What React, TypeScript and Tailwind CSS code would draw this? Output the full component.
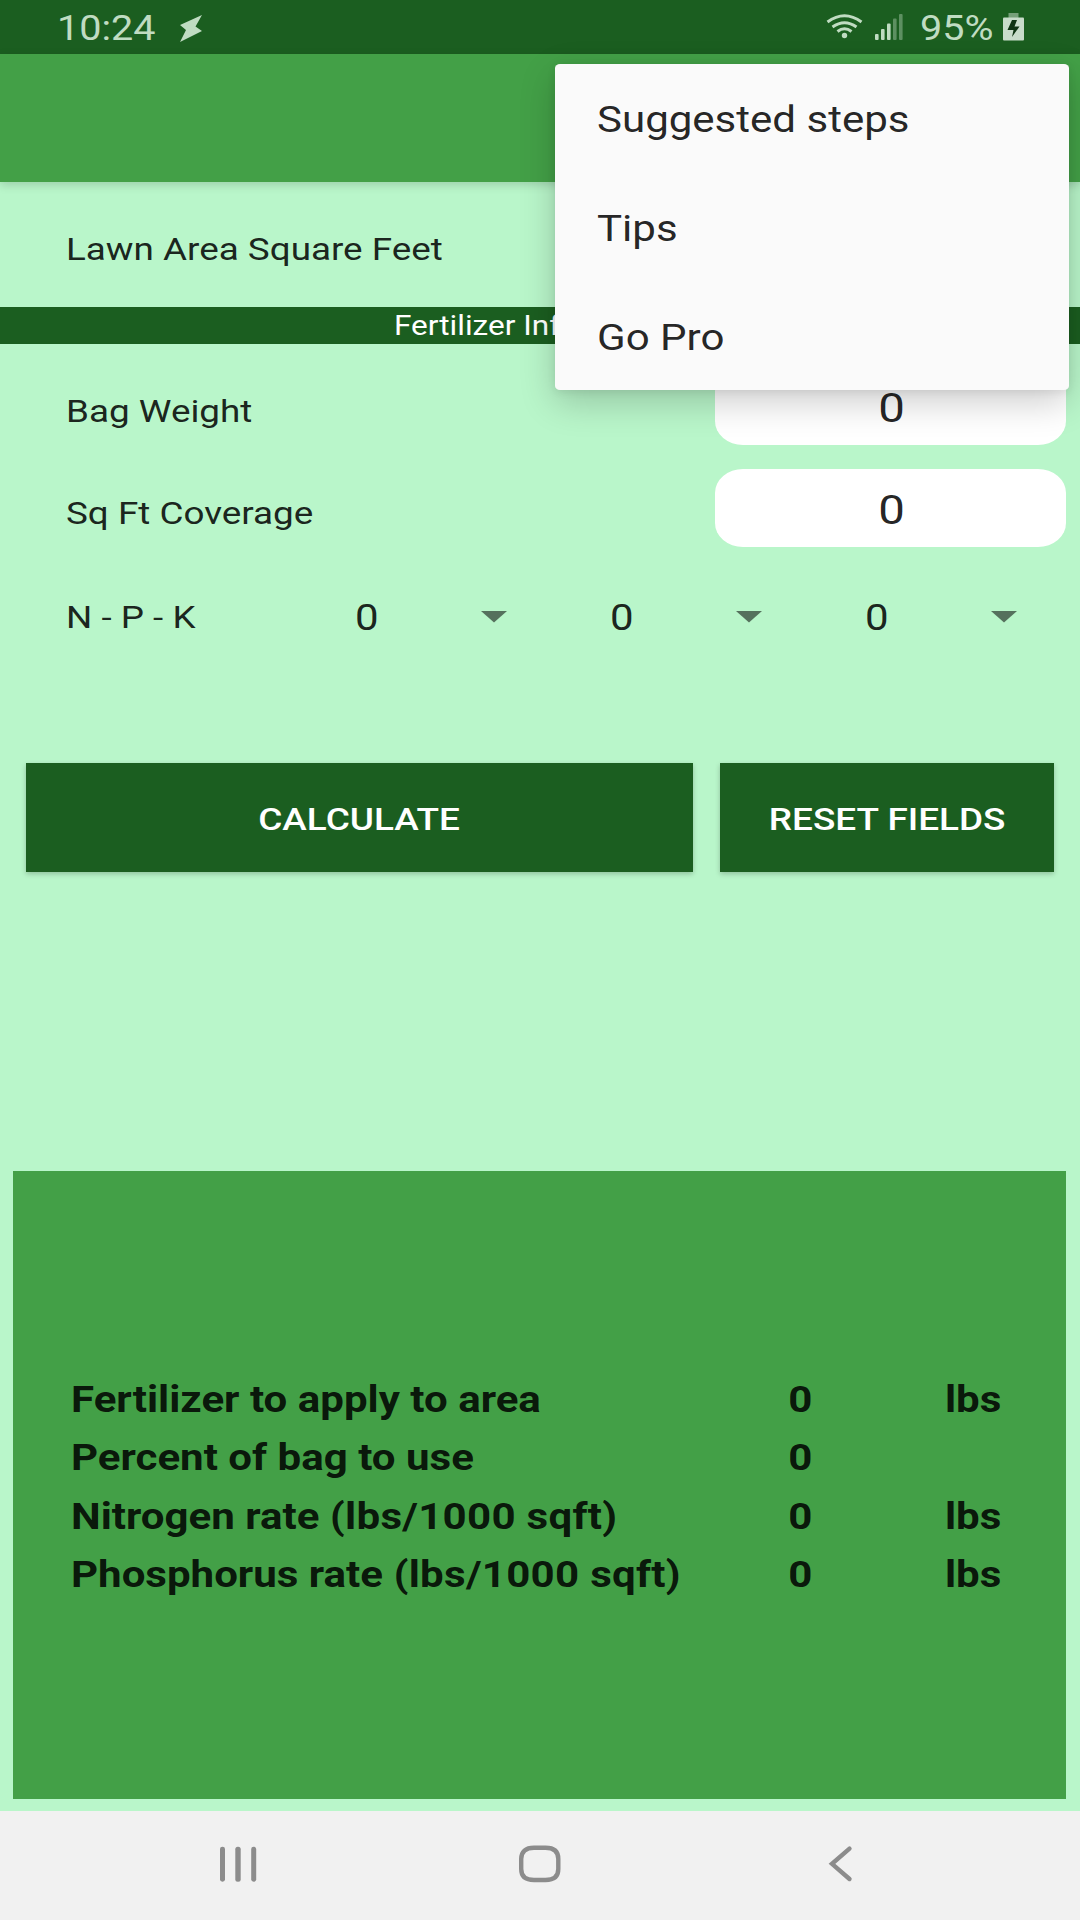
import { useState } from 'react'
import type { ReactNode } from 'react'
import clsx from 'clsx'

interface ResultRow {
  label: string
  basis?: string
  value: string
  unit?: string
}

const menuItems = ['Suggested steps', 'Tips', 'Go Pro']

const results: ResultRow[] = [
  { label: 'Fertilizer to apply to area', value: '0', unit: 'lbs' },
  { label: 'Percent of bag to use', value: '0' },
  { label: 'Nitrogen rate', basis: '(lbs/1000 sqft)', value: '0', unit: 'lbs' },
  { label: 'Phosphorus rate', basis: '(lbs/1000 sqft)', value: '0', unit: 'lbs' },
]

// Wide text, grows from the left edge or from the middle
function Wide({ children, className }: { children: ReactNode; className?: string }) {
  return (
    <span className={clsx('inline-block scale-x-[1.158] whitespace-nowrap', className)}>
      {children}
    </span>
  )
}

function StatusBar() {
  return (
    <div className="flex h-[54px] items-center bg-[#1b5e20] text-[#c0dcc2]">
      <div className="flex w-[180px] pl-[57px] pt-[3px] text-[34.2px] leading-none">
        <Wide className="origin-left">10:24</Wide>
      </div>
      <svg width="23" height="28" viewBox="0 0 23 28" className="mt-[2px]" fill="currentColor">
        <path d="M22 1 L0 11 L6 16 L0 28 L22 17 L15.500 12.500 Z" />
      </svg>
      <div className="ml-auto flex items-center">
        <svg width="37" height="25" viewBox="0 0 37 25" fill="none" stroke="currentColor">
          <path d="M1.500 8 Q18.500 -4.500 35.500 8" strokeWidth="3" />
          <path d="M6.500 13 Q18.500 4.500 30.500 13" strokeWidth="3" />
          <path d="M11.500 17.500 Q18.500 12 25.500 17.500" strokeWidth="3" />
          <circle cx="18.500" cy="21.500" r="2.700" fill="currentColor" stroke="none" />
        </svg>
        <svg width="28" height="27" viewBox="0 0 28 27" fill="currentColor" className="ml-[12px]">
          <rect x="0" y="21" width="3.600" height="6" rx="1" />
          <rect x="6" y="16" width="3.600" height="11" rx="1" />
          <rect x="12" y="10.500" width="3.600" height="16.500" rx="1" />
          <rect x="18" y="5.500" width="3.600" height="21.500" rx="1" opacity="0.4" />
          <rect x="24" y="1" width="3.600" height="26" rx="1" opacity="0.4" />
        </svg>
        <div className="ml-[17px] w-[83px] pt-[3px] text-[34.2px] leading-none">
          <Wide className="origin-left">95%</Wide>
        </div>
        <svg width="21" height="28" viewBox="0 0 21 28" className="mr-[56px]">
          <rect x="5.500" y="0" width="10" height="5" fill="#76a079" />
          <rect x="0" y="4.500" width="21" height="23" rx="1" fill="#c8dcca" />
          <path d="M9 7 H14 L11.500 13.500 H16.500 L9 24 L10.500 17 H4.500 Z" fill="#0f3413" />
        </svg>
      </div>
    </div>
  )
}

function Label({ children }: { children: ReactNode }) {
  return (
    <div className="w-[715px] pl-[66px] text-[31.8px] leading-[40px] text-black/87">
      <Wide className="origin-left">{children}</Wide>
    </div>
  )
}

function NumberField({ value }: { value: string }) {
  return (
    <div className="flex h-[78px] w-[351px] items-center justify-center rounded-[28px/24px] bg-white pl-[2px] pt-[4px] text-[40.9px] leading-none text-black/87">
      <Wide>{value}</Wide>
    </div>
  )
}

function Spinner({ value }: { value: string }) {
  return (
    <div className="flex w-[255px] shrink-0 items-center">
      <div className="w-[126px] pt-[1px] text-[36.3px] leading-[40px] text-black/87">
        <Wide className="origin-left">{value}</Wide>
      </div>
      <svg width="26" height="12" viewBox="0 0 26 12" className="-mt-[1px]">
        <path d="M0 0 H26 L13 11.500 Z" fill="#000" fillOpacity="0.54" />
      </svg>
    </div>
  )
}

export default function App() {
  const [menuOpen] = useState(true)

  return (
    <div className="relative flex h-[1920px] w-[1080px] flex-col overflow-hidden bg-[#b9f6ca] font-['Roboto',sans-serif]">
      <StatusBar />
      <header className="h-[127.5px] bg-[#43a047] shadow-[0_3px_9px_rgba(0,0,0,0.16)]" />

      <main className="flex h-[1629.5px] flex-col">
        <div className="flex h-[125.5px] items-center pt-[10px]">
          <Label>Lawn Area Square Feet</Label>
        </div>

        {/* Section title */}
        <div className="flex h-[37px] items-center justify-center bg-[#1b5e20] pl-[2px] pt-[3px] text-[27.24px] leading-none text-white">
          <Wide>Fertilizer Information</Wide>
        </div>

        <div className="mt-[23px] flex flex-col gap-[24px]">
          <div className="flex items-center">
            <div className="pt-[10px]">
              <Label>Bag Weight</Label>
            </div>
            <NumberField value="0" />
          </div>
          <div className="flex items-center">
            <div className="pt-[10px]">
              <Label>Sq Ft Coverage</Label>
            </div>
            <NumberField value="0" />
          </div>
        </div>

        {/* N - P - K pickers */}
        <div className="mt-[50px] flex h-[40px] items-center">
          <div className="w-[355px] shrink-0 pl-[66px] text-[31.8px] leading-[40px] text-black/87">
            <Wide className="origin-left">N - P - K</Wide>
          </div>
          <Spinner value="0" />
          <Spinner value="0" />
          <Spinner value="0" />
        </div>

        <div className="mt-[126px] flex gap-[27px] pl-[26px] text-[31.9px] font-medium leading-none text-white">
          <button className="h-[109px] w-[667px] bg-[#1b5e20] pt-[4px] shadow-[0_2px_5px_rgba(0,0,0,0.22)]">
            <Wide>CALCULATE</Wide>
          </button>
          <button className="h-[109px] w-[334px] bg-[#1b5e20] pt-[4px] shadow-[0_2px_5px_rgba(0,0,0,0.22)]">
            <Wide>RESET FIELDS</Wide>
          </button>
        </div>

        {/* Results */}
        <div className="ml-[13px] mt-[299px] flex h-[628px] w-[1053px] flex-col justify-center bg-[#43a047] pt-[5px] text-[36.3px] font-bold leading-[58.4px] text-black/87">
          {results.map(row => (
            <div key={row.label} className="flex">
              <div className="w-[707px] pl-[58px]">
                <Wide className="origin-left">
                  {row.label}
                  {row.basis && <span className="tracking-[0.25px]"> {row.basis}</span>}
                </Wide>
              </div>
              <div className="w-[160px] text-center">
                <Wide>{row.value}</Wide>
              </div>
              <div className="pl-[65px]">
                <Wide className="origin-left">{row.unit}</Wide>
              </div>
            </div>
          ))}
        </div>
      </main>

      {/* Navigation bar */}
      <nav className="flex flex-1 items-start bg-[#f1f1f1] pl-[220px] pt-[34px] text-[#8c8c8c]">
        <svg width="38" height="38" viewBox="0 0 38 38" fill="currentColor">
          <rect x="0" y="1.700" width="5" height="35" rx="2.400" />
          <rect x="15.300" y="1.700" width="5.400" height="35" rx="2.500" />
          <rect x="31.200" y="1.700" width="5" height="35" rx="2.400" />
        </svg>
        <svg width="44" height="38" viewBox="0 0 44 38" fill="none" stroke="currentColor" className="ml-[260px]">
          <path
            d="M16 2.800 H27.500 Q40.300 2.800 40.300 14 V24 Q40.300 35 27.500 35 H16 Q3.200 35 3.200 24 V14 Q3.200 2.800 16 2.800 Z"
            strokeWidth="4.400"
          />
        </svg>
        <svg width="26" height="38" viewBox="0 0 26 38" fill="none" stroke="currentColor" className="ml-[266px]">
          <path d="M21.500 3.700 L4 18.800 L21.500 34" strokeWidth="4.400" strokeLinecap="round" />
        </svg>
      </nav>

      {/* Overflow menu */}
      {menuOpen && (
        <div className="absolute left-[555px] top-[64px] w-[514px] rounded-[5px/4px] bg-[#fafafa] shadow-[0_12px_36px_rgba(0,0,0,0.2),0_2px_8px_rgba(0,0,0,0.08)]">
          {menuItems.map(item => (
            <div
              key={item}
              className="flex h-[108.8px] items-center pl-[42px] pt-[4px] text-[36.3px] text-black/87"
            >
              <Wide className="origin-left">{item}</Wide>
            </div>
          ))}
        </div>
      )}
    </div>
  )
}
